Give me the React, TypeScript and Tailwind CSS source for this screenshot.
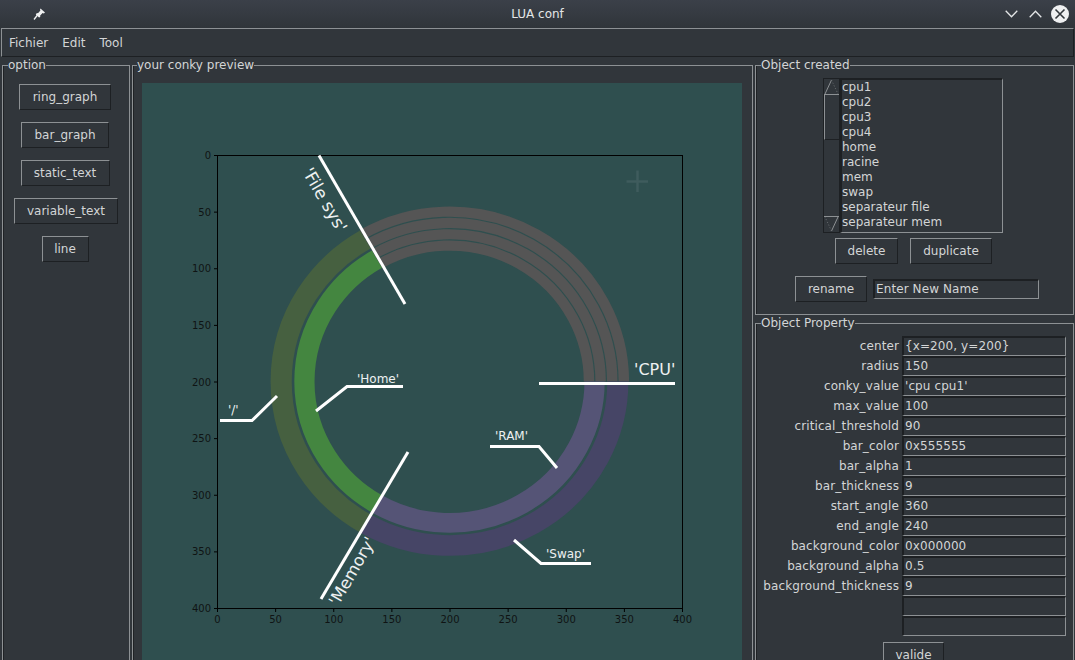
import React from "react";

const font = { fontFamily: '"DejaVu Sans", sans-serif' };

function Btn({ children, className = "" }: { children: React.ReactNode; className?: string }) {
  return (
    <div
      className={
        "h-[26px] flex items-center justify-center border border-t-[#8d9194] border-l-[#8d9194] border-r-[#1d2023] border-b-[#1d2023] text-[12px] text-[#d3d5d6] " +
        className
      }
    >
      {children}
    </div>
  );
}

function Group({ title, className = "", legendClass = "ml-[5px]", children }: { title: string; className?: string; legendClass?: string; children: React.ReactNode }) {
  return (
    <fieldset className={"min-w-0 border border-[#8d9194] border-b-0 shadow-[inset_1px_0_0_#1f2225] " + className}>
      <legend className={"text-[12px] leading-[14px] text-[#d3d5d6] " + legendClass}>{title}</legend>
      {children}
    </fieldset>
  );
}

const PROPS: [string, string][] = [
  ["center", "{x=200, y=200}"],
  ["radius", "150"],
  ["conky_value", "'cpu cpu1'"],
  ["max_value", "100"],
  ["critical_threshold", "90"],
  ["bar_color", "0x555555"],
  ["bar_alpha", "1"],
  ["bar_thickness", "9"],
  ["start_angle", "360"],
  ["end_angle", "240"],
  ["background_color", "0x000000"],
  ["background_alpha", "0.5"],
  ["background_thickness", "9"],
  ["", ""],
  ["", ""],
];

const LIST = ["cpu1", "cpu2", "cpu3", "cpu4", "home", "racine", "mem", "swap", "separateur file", "separateur mem"];

const CX = 449.5;
const CY = 381.5;
const SX = 1.1625;
const SY = 1.1325;

function arcPath(r: number, from: number, to: number) {
  const pt = (a: number) => {
    const t = (a * Math.PI) / 180;
    return [r * Math.sin(t), -r * Math.cos(t)];
  };
  const [x1, y1] = pt(from);
  const [x2, y2] = pt(to);
  return `M${x1} ${y1}A${r} ${r} 0 0 1 ${x2} ${y2}`;
}

const ARCS: [number, number, number, number, string][] = [
  [150, 9, -30, 90, "#555555"],
  [140, 9, -30, 90, "#555555"],
  [130, 9, -30, 90, "#555555"],
  [120, 9, -30, 90, "#555555"],
  [144.8, 18.2, 90, 210, "#464566"],
  [124.8, 17.4, 90, 210, "#555476"],
  [144.8, 18.2, 210, 330, "#466040"],
  [124.8, 17.4, 210, 330, "#448640"],
];

const TICKS = [0, 50, 100, 150, 200, 250, 300, 350, 400];
const LINES = [
  "319,155.5 405,304",
  "321,599 408,452",
  "539,383.5 675,383.5",
  "220,420.5 252,420.5 277,396",
  "316,411 347,386.5 403,386.5",
  "490,446.5 539,446.5 557,468",
  "514,540 541,563.5 591,563.5",
];

function Chart() {
  return (
    <svg width="600" height="577" viewBox="142 83 600 577" className="block" style={font}>
      <g transform={`translate(${CX} ${CY}) scale(${SX} ${SY})`}>
        {ARCS.map(([r, w, a, b, c], i) => (
          <path key={i} d={arcPath(r, a, b)} fill="none" stroke={c} strokeWidth={w} />
        ))}
      </g>
      <path d="M637.5 170.5V192M626.5 181.5H648" stroke="#3f5c5d" strokeWidth="2.5" fill="none" />
      <rect x="217.5" y="155.5" width="465" height="453" fill="none" stroke="#000" strokeWidth="1" />
      {TICKS.map((t) => (
        <g key={t} fill="#0f1414" fontSize="10">
          <line x1={217.5 + t * SX} x2={217.5 + t * SX} y1="608.5" y2="612" stroke="#000" />
          <line x1="214" x2="217.5" y1={155.5 + t * SY} y2={155.5 + t * SY} stroke="#000" />
          <text x={217.5 + t * SX} y="623" textAnchor="middle">{t}</text>
          <text x="211" y={159 + t * SY} textAnchor="end">{t}</text>
        </g>
      ))}
      {LINES.map((p, i) => (
        <polyline key={i} points={p} fill="none" stroke="#fff" strokeWidth="3" strokeLinejoin="miter" />
      ))}
      <g fill="#eef1f1">
        <text x="634" y="375" fontSize="16">'CPU'</text>
        <text x="357" y="383" fontSize="12">'Home'</text>
        <text x="228" y="414" fontSize="12">'/'</text>
        <text x="495" y="440" fontSize="12">'RAM'</text>
        <text x="546" y="558" fontSize="12">'Swap'</text>
        <text transform="translate(302 172) rotate(60)" fontSize="17">'File sys'</text>
        <text transform="translate(338 607) rotate(-60)" fontSize="16.5">'Memory'</text>
      </g>
    </svg>
  );
}

function ScrollArrow({ up }: { up: boolean }) {
  return up ? (
    <svg width="15" height="16" className="block shrink-0">
      <path d="M1 15 L7.5 1" stroke="#8d9194" fill="none" />
      <path d="M7.5 1 L14 15" stroke="#6b6f72" strokeDasharray="1 2" fill="none" />
      <path d="M0 15.5H15" stroke="#8d9194" />
    </svg>
  ) : (
    <svg width="15" height="16" className="block shrink-0">
      <path d="M14 1 L7.5 15" stroke="#8d9194" fill="none" />
      <path d="M7.5 15 L1 1" stroke="#6b6f72" strokeDasharray="1 2" fill="none" />
      <path d="M0 0.5H15" stroke="#8d9194" />
    </svg>
  );
}

const sunken = "border-t-2 border-l-2 border-r border-b border-t-[#1d2023] border-l-[#1d2023] border-r-[#8d9194] border-b-[#8d9194]";

export default function App() {
  return (
    <div className="w-[1075px] h-[660px] overflow-hidden bg-[#31363b] flex flex-col text-[#d3d5d6]" style={font}>
      <div className="h-[28px] shrink-0 flex items-center bg-gradient-to-b from-[#3b4049] to-[#30353a]">
        <div className="w-[78px] pl-[33px]">
          <svg width="13" height="12" viewBox="0 0 13 12" className="block">
            <path d="M1 11.5L4.5 7" stroke="#eff0f1" strokeWidth="1.3" fill="none" />
            <path d="M7.5 0.5L12 4.5L10.8 5.4L9.6 5L7.2 7.4L7.2 9L6 9.6L2.8 6.4L3.6 5.2L5.2 5L7.4 2.6L7 1.4Z" fill="#eff0f1" />
          </svg>
        </div>
        <div className="flex-1 text-center text-[12px] text-[#e4e6e7]">LUA conf</div>
        <div className="w-[78px] flex items-center pr-[6px] justify-end">
          <svg width="13" height="8" viewBox="0 0 13 8" className="block mr-[11px]">
            <path d="M0.7 0.8L6.5 6.8L12.3 0.8" stroke="#e4e6e7" strokeWidth="1.3" fill="none" />
          </svg>
          <svg width="13" height="8" viewBox="0 0 13 8" className="block mr-[9px]">
            <path d="M0.7 7.2L6.5 1.2L12.3 7.2" stroke="#e4e6e7" strokeWidth="1.3" fill="none" />
          </svg>
          <svg width="18" height="18" viewBox="0 0 18 18" className="block">
            <circle cx="9" cy="9" r="9" fill="#eff0f1" />
            <path d="M4.5 4.5L13.5 13.5M13.5 4.5L4.5 13.5" stroke="#31363b" strokeWidth="1.6" fill="none" />
          </svg>
        </div>
      </div>

      <div className="h-[29px] shrink-0 mx-[1px] w-[1073px] border border-t-[#8d9194] border-l-[#8d9194] border-r-[#1d2023] border-b-[#1d2023] flex items-center gap-[14px] pl-[7px] text-[12px]">
        <span>Fichier</span>
        <span>Edit</span>
        <span>Tool</span>
      </div>

      <div className="flex-1 min-h-0 flex pt-[1px] pl-[2px] gap-[2px] pr-[1px]">
        <Group title="option" className="w-[128px] shrink-0">
          <div className="flex flex-col items-center gap-[12px] pt-[12px] pr-[2px]">
            <Btn className="w-[92px]">ring_graph</Btn>
            <Btn className="w-[88px]">bar_graph</Btn>
            <Btn className="w-[89px]">static_text</Btn>
            <Btn className="w-[104px] ml-[2px]">variable_text</Btn>
            <Btn className="w-[47px]">line</Btn>
          </div>
        </Group>

        <Group title="your conky preview" className="w-[621px] shrink-0" legendClass="ml-[4px]">
          <div className="pl-[9px] pt-[11px]">
            <div className="w-[600px] h-[577px] bg-[#2f4f4f]">
              <Chart />
            </div>
          </div>
        </Group>

        <div className="flex-1 min-w-0 flex flex-col">
          <Group title="Object created" className="h-[257px] shrink-0 !border-b">
            <div className="flex flex-col">
              <div className="flex pl-[67px] pt-[6px]">
                <div className="w-[17px] h-[155px] border border-[#1d2023] flex flex-col">
                  <ScrollArrow up />
                  <div className="h-[45px] border-l border-b border-l-[#8d9194] border-b-[#1d2023] shrink-0" />
                  <div className="flex-1" />
                  <ScrollArrow up={false} />
                </div>
                <div className={"w-[163px] h-[155px] text-[12px] leading-[15px] " + sunken}>
                  {LIST.map((t) => (
                    <div key={t} className="h-[15px]">{t}</div>
                  ))}
                </div>
              </div>
              <div className="flex pl-[79px] gap-[12px] pt-[5px]">
                <Btn className="w-[63px]">delete</Btn>
                <Btn className="w-[82px]">duplicate</Btn>
              </div>
              <div className="flex items-center pl-[39px] gap-[6px] pt-[12px]">
                <Btn className="w-[72px]">rename</Btn>
                <div className={"w-[166px] h-[20px] text-[12px] tracking-[0.1px] leading-[17px] pl-[1px] " + sunken}>
                  Enter New Name
                </div>
              </div>
            </div>
          </Group>

          <Group title="Object Property" className="flex-1 min-h-0 mt-[1px]">
            <div className="pt-[6px]">
              <div className="flex flex-col">
                {PROPS.map(([k, v], i) => (
                  <div key={i} className="flex h-[20px] items-center">
                    <div className="w-[146px] pr-[3px] text-right text-[12px] tracking-[0.1px] whitespace-nowrap">{k}</div>
                    <div className={"w-[164px] h-[20px] text-[12px] tracking-[0.1px] leading-[17px] pl-[1px] whitespace-nowrap " + sunken}>
                      {v}
                    </div>
                  </div>
                ))}
              </div>
              <div className="flex pl-[127px] pt-[6px]">
                <Btn className="w-[61px]">valide</Btn>
              </div>
            </div>
          </Group>
        </div>
      </div>
    </div>
  );
}
